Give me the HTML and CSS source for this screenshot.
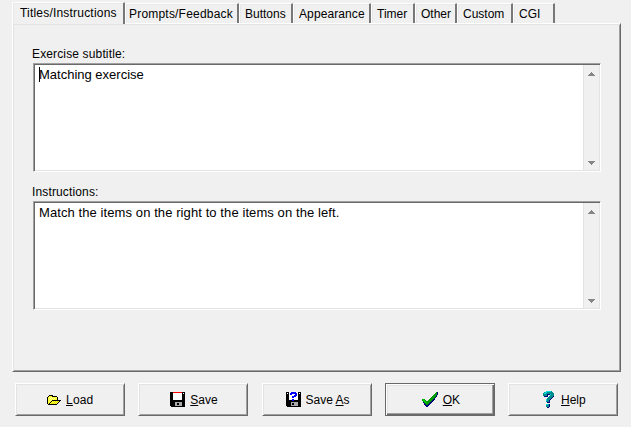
FILE: index.html
```
<!DOCTYPE html>
<html lang="en">
<head>
<meta charset="utf-8">
<title>Configuration</title>
<link rel="stylesheet" href="styles.css">
</head>
<body>
<nav class="tabs">
<div class="tab active t1"><span>Titles/Instructions</span></div>
<div class="tab t2"><span>Prompts/Feedback</span></div>
<div class="tab t3"><span>Buttons</span></div>
<div class="tab t4"><span>Appearance</span></div>
<div class="tab t5"><span>Timer</span></div>
<div class="tab t6"><span>Other</span></div>
<div class="tab t7"><span>Custom</span></div>
<div class="tab t8"><span>CGI</span></div>
</nav>
<main class="panel">
<div class="label subtitle">Exercise subtitle:</div>
<div class="memo">
<div class="text caret">Matching exercise</div>
<div class="scroll"><svg width="7" height="4" viewBox="0 0 7 4"><path d="M3 0h1v1h1v1h1v1h1v1H0V3h1V2h1V1h1z"/></svg><svg width="7" height="4" viewBox="0 0 7 4"><path d="M0 0h7v1H6v1H5v1H4v1H3V3H2V2H1V1H0z"/></svg></div>
</div>
<div class="label instructions">Instructions:</div>
<div class="memo">
<div class="text sentence">Match the items on the right to the items on the left.</div>
<div class="scroll"><svg width="7" height="4" viewBox="0 0 7 4"><path d="M3 0h1v1h1v1h1v1h1v1H0V3h1V2h1V1h1z"/></svg><svg width="7" height="4" viewBox="0 0 7 4"><path d="M0 0h7v1H6v1H5v1H4v1H3V3H2V2H1V1H0z"/></svg></div>
</div>
</main>
<footer class="buttons">
<div class="button load">
<svg width="14" height="10" viewBox="0 0 14 10"><path fill="#000" d="M1 1h1V0h4v1h4v1h1v3h3v1h-1v1h-1v1h-1v1h-1v1H1V9H0V2h1z"/><path fill="#ff3" d="M2 1h3v1h5v3H5v1H4v1H3v1H2v1H1V2h1zM5 6h7v1h-1v1h-1v1H3V8h1V7h1z"/><path fill="#ffff9c" d="M2 2h1v1H2zM4 2h1v1H4zM3 3h1v1H3zM5 3h1v1H5zM7 3h1v1H7zM2 4h1v1H2zM4 4h1v1H4zM6 4h1v1H6zM3 5h1v1H3z"/><path fill="#e2e200" d="M6 6h1v1H6zM8 6h1v1H8zM10 6h1v1h-1zM5 7h1v1H5zM7 7h1v1H7zM9 7h1v1H9zM4 8h1v1H4zM6 8h1v1H6zM8 8h1v1H8z"/></svg>
<span><u>L</u>oad</span></div>
<div class="button save">
<svg width="15" height="15" viewBox="0 0 15 15"><path fill="#000" d="M0 0h15v15H1v-1H0z"/><path fill="#fff" d="M3 1h9v7H3z"/><path fill="red" d="M3 0h9v1H3z"/><path fill="#aaa" d="M5 10h7v4H5z"/><path fill="#000" d="M7 11h2v2H7z"/><path fill="#fff" d="M13 1h1v1h-1z"/></svg>
<span><u>S</u>ave</span></div>
<div class="button saveas">
<svg width="15" height="15" viewBox="0 0 15 15"><path fill="#000" d="M0 0h3v8h9V0h3v15H1v-1H0z"/><path fill="#fff" d="M3 0h9v8H3zM1 1h1v1H1zM13 1h1v1h-1z"/><path fill="#00f" d="M5 0h5v1h1v3h-1v1H8v1H6V4h2V3h1V2H6v1H4V1h1zM6 7h2v2H6z"/><path fill="#aaa" d="M5 10h7v4H5z"/><path fill="#000" d="M6 11h2v2H6z"/></svg>
<span>Save <u>A</u>s</span></div>
<div class="button ok">
<svg width="16" height="15" viewBox="0 0 16 15"><path fill="#000080" d="M14 0h2v3h-1v2h-1v1h-1v2h-1v1h-1v1h-1v1H9v1H8v1H7v1H6v1H4v-1H3v-1H2v-2H1V9H0V7h3v1h1v1h2V8h1V7h1V6h1V5h1V4h1V3h1V2h1V1h1z"/><path fill="#009b00" d="M14 0h1v3h-1v2h-1v1h-1v1h-1v1h-1v1H9v1H8v1H7v1H6v1H4v-1H3v-1H2v-1H1V9H0V7h3v1h1v1h2V8h1V7h1V6h1V5h1V4h1V3h1V2h1V1h1z"/><path fill="#0c0" d="M1 7h1v1h1v1h1v1h1v1H3v-1H2V9H1z"/></svg>
<span><u>O</u>K</span></div>
<div class="button help">
<svg width="12" height="17" viewBox="0 0 12 17"><path fill="#000080" d="M3 1h7v1h1v4h-1v1H9v1H8v1H7v3H4V9h1V7h2V6h1V4H5v2H1V4h2zM4 13h3v3H6v1H4z"/><path fill="#008c8c" d="M3 0h6v1h1v1h1v3h-1v1H9v1H8v1H7v1H6v2H3V8h1V7h1V6h1V5h1V3H4v2H0V2h1V1h2zM3 13h3v3H3z"/><path fill="#0dd" d="M3 0h5v1H4v1H3v1H1V2h1V1h1zM3 8h1v2H3zM3 13h2v1H3zM7 3h1v1H7z"/></svg>
<span><u>H</u>elp</span></div>
</footer>
</body>
</html>
```
FILE: styles.css
```
* { box-sizing: border-box; }
body {
  margin: 0;
  width: 631px;
  height: 427px;
  overflow: hidden;
  padding: 2px 10px 0 12px;
  background: #f0f0f0;
  color: #000;
  font: 12px/15px "Liberation Sans", Arial, sans-serif;
}
svg { display: block; flex: none; shape-rendering: crispEdges; }
.tabs { display: flex; align-items: flex-end; height: 22px; }
.tab {
  height: 20px;
  margin-bottom: 1px;
  padding: 3px 0 0 5px;
  white-space: nowrap;
  border-top: 1px solid #fff;
  border-left: 1px solid #fff;
  border-right: 2px solid #777;
  border-radius: 2px 1px 0 0;
  box-shadow: inset 1px 1px #e8e8e8;
}
.tab.active {
  position: relative;
  height: 22px;
  margin-bottom: 0;
  padding: 3px 0 0 7px;
  background: #f0f0f0;
}
.t1 { width: 113px; }
.tab.t2 { width: 114px; padding-left: 3px; }
.t3 { width: 54px; }
.t4 { width: 78px; }
.t5 { width: 44px; }
.t6 { width: 42px; }
.t7 { width: 56px; }
.t8 { width: 42px; }
.t1 span, .t2 span { letter-spacing: .2px; }
.t4 span { letter-spacing: .1px; }
.panel {
  width: 609px;
  height: 349px;
  margin-top: -1px;
  padding: 23px 18px 0 20px;
  border: 1px solid #fff;
  border-right: 2px solid #696969;
  border-bottom: 2px solid #696969;
  border-right-width: 1px;
  border-bottom-width: 1px;
  box-shadow: inset 1px 1px #e3e3e3, inset -1px -1px #a0a0a0;
}
.label { height: 16px; margin-left: -1px; white-space: nowrap; letter-spacing: .14px; }
.instructions { margin-top: 13px; }
.memo {
  display: flex;
  width: 568px;
  height: 109px;
  background: #fff;
  border: 1px solid #a0a0a0;
  border-right-color: #fff;
  border-bottom-color: #fff;
  box-shadow: inset 1px 1px #696969, inset -1px -1px #e3e3e3;
}
.text { flex: 1; padding: 3px 0 0 5px; font-size: 13px; white-space: nowrap; }
.sentence { letter-spacing: .09px; }
.caret::before {
  content: "";
  position: absolute;
  width: 1px;
  height: 15px;
  background: #000;
}
.scroll {
  width: 16px;
  margin: 1px 1px 1px 0;
  padding: 7px 0 5px 4px;
  display: flex;
  flex-direction: column;
  justify-content: space-between;
  background: #f0f0f0;
  border-left: 1px solid #e3e3e3;
}
.scroll path { fill: #868686; }
.buttons { display: grid; grid-template-columns: 110px 110px 110px 110px 110px; gap: 13.25px; margin: 11px 0 0 3px; }
.button {
  display: flex;
  align-items: center;
  height: 33px;
  border: 1px solid #fff;
  border-right-color: #696969;
  border-bottom-color: #696969;
  box-shadow: inset 1px 1px #e3e3e3, inset -1px -1px #a0a0a0;
  padding-left: 31px;
  gap: 5px;
  white-space: nowrap;
}
.button span { padding-top: 2px; }
.button u { text-underline-offset: 1px; text-decoration-thickness: 1px; }
.load { gap: 5px; }
.load span { letter-spacing: .2px; }
.saveas { padding-left: 23px; }
.ok { padding-left: 36px; border: 1px solid #696969; box-shadow: inset 1px 1px #fff, inset -1px -1px #696969, inset -2px -2px #a0a0a0, inset 2px 2px #e3e3e3; }
.help { padding-left: 34px; gap: 6px; }
```
